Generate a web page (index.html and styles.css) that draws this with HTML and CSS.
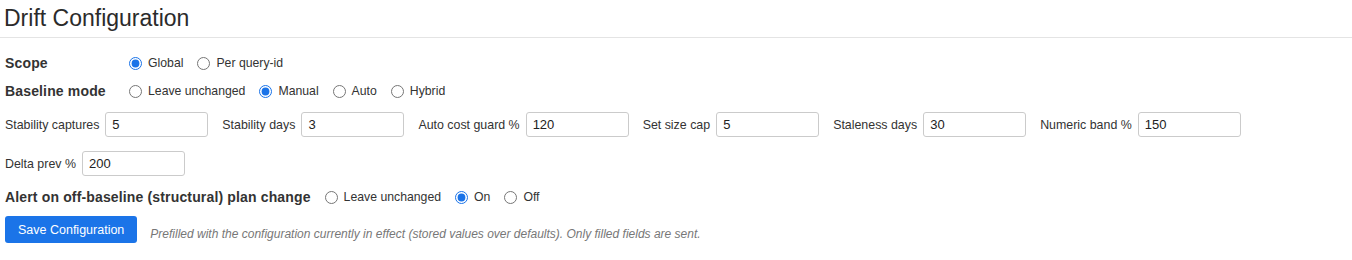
FILE: index.html
```html
<!DOCTYPE html>
<html lang="en">
<head>
    <meta charset="UTF-8">
    <meta name="viewport" content="width=device-width, initial-scale=1.0">
    <title>Drift Configuration</title>
    <link rel="stylesheet" href="styles.css">
</head>
<body>
    <div class="page">
        <h1 class="title">Drift Configuration</h1>

        <form class="config" onsubmit="return false;">
            <div class="row">
                <span class="row-label">Scope</span>
                <label class="opt"><input type="radio" name="scope" value="global" checked>Global</label>
                <label class="opt"><input type="radio" name="scope" value="query">Per query-id</label>
            </div>

            <div class="row">
                <span class="row-label">Baseline mode</span>
                <label class="opt"><input type="radio" name="mode" value="">Leave unchanged</label>
                <label class="opt"><input type="radio" name="mode" value="manual" checked>Manual</label>
                <label class="opt"><input type="radio" name="mode" value="auto">Auto</label>
                <label class="opt"><input type="radio" name="mode" value="hybrid">Hybrid</label>
            </div>

            <div class="fields">
                <label class="field">Stability captures <input type="text" value="5"></label>
                <label class="field">Stability days <input type="text" value="3"></label>
                <label class="field">Auto cost guard % <input type="text" value="120"></label>
                <label class="field">Set size cap <input type="text" value="5"></label>
                <label class="field">Staleness days <input type="text" value="30"></label>
                <label class="field">Numeric band % <input type="text" value="150"></label>
                <label class="field">Delta prev % <input type="text" value="200"></label>
            </div>

            <div class="row">
                <span class="row-label">Alert on off-baseline (structural) plan change</span>
                <label class="opt"><input type="radio" name="alert" value="">Leave unchanged</label>
                <label class="opt"><input type="radio" name="alert" value="on" checked>On</label>
                <label class="opt"><input type="radio" name="alert" value="off">Off</label>
            </div>

            <div class="actions">
                <button type="submit" class="btn-save">Save Configuration</button>
                <span class="note">Prefilled with the configuration currently in effect (stored values over defaults). Only filled fields are sent.</span>
            </div>
        </form>
    </div>
</body>
</html>
```

FILE: styles.css
```css
body {
    margin: 0;
    font-family: 'Liberation Sans', Arial, Helvetica, sans-serif;
    color: #333;
    background: #fff;
}
.page {
    padding: 0 5px;
}
.title {
    margin: 0 -5px;
    padding: 4px 4px 5px;
    font-size: 23px;
    font-weight: normal;
    line-height: 28px;
    color: #2b2b2b;
    border-bottom: 1px solid #e4e4e4;
}
.config {
    padding-top: 11px;
}
.row {
    display: flex;
    align-items: center;
    height: 28px;
}
.row-label {
    min-width: 110px;
    margin-right: 14px;
    font-size: 14px;
    font-weight: bold;
    letter-spacing: 0.15px;
    color: #333;
}
.opt {
    display: flex;
    align-items: center;
    margin-right: 14px;
    font-size: 12.25px;
    color: #333;
}
.opt input {
    width: 13px;
    height: 13px;
    margin: 0 6px 0 0;
    accent-color: #1a73e8;
}
.fields {
    display: flex;
    flex-wrap: wrap;
    column-gap: 14px;
    row-gap: 14px;
    margin: 7px 0;
}
.field {
    display: flex;
    align-items: center;
    gap: 6px;
    font-size: 12.4px;
    color: #333;
}
.field input {
    box-sizing: border-box;
    width: 103px;
    height: 25px;
    padding: 0 6px;
    border: 1px solid #cbcbcb;
    border-radius: 3px;
    font-family: inherit;
    font-size: 13px;
    color: #222;
}
.actions {
    display: flex;
    align-items: center;
    gap: 13px;
    margin-top: 5px;
}
.btn-save {
    height: 27px;
    padding: 0 13px;
    border: none;
    border-radius: 3px;
    background-color: #1b74e8;
    color: #fff;
    font-family: inherit;
    font-size: 12.5px;
    cursor: pointer;
}
.btn-save:hover {
    background-color: #1662c9;
}
.note {
    padding-top: 8px;
    font-size: 12px;
    font-style: italic;
    color: #777;
}
```
